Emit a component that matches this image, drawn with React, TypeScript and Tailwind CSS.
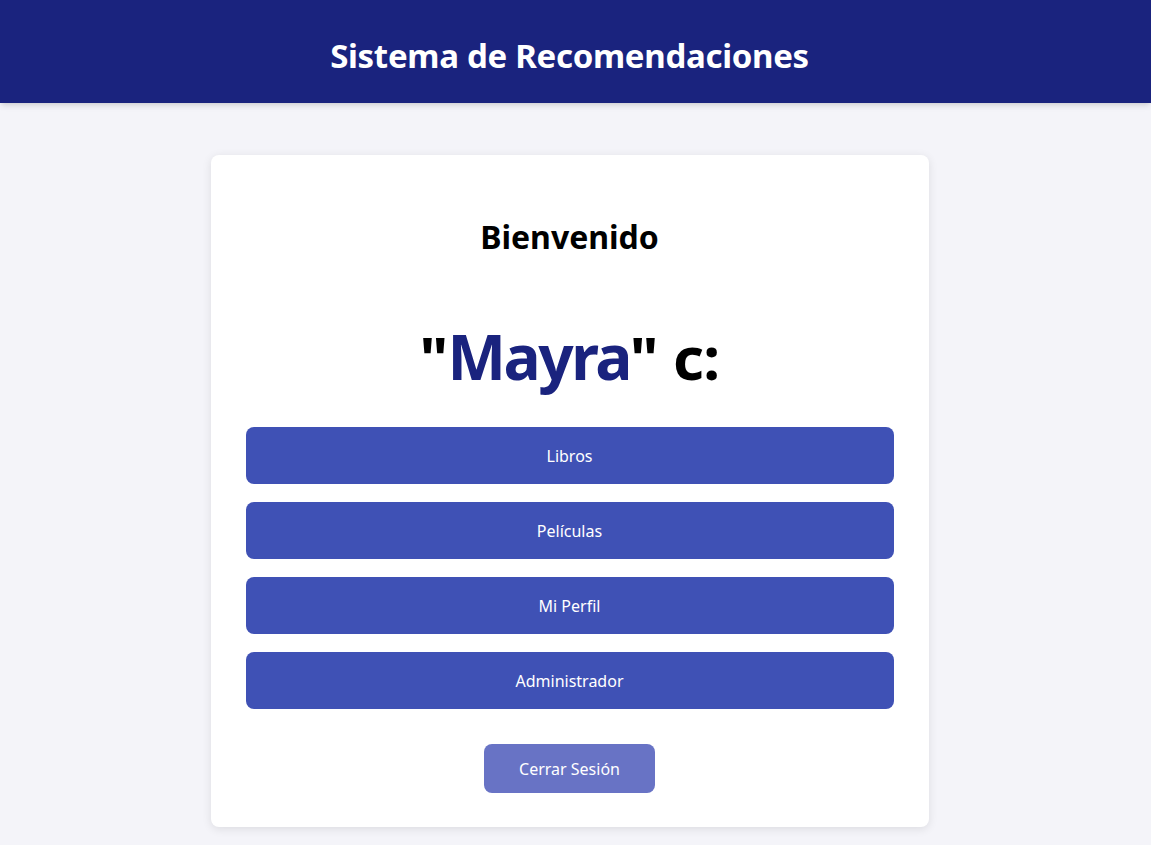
import React from 'react';

const options = ['Libros', 'Películas', 'Mi Perfil', 'Administrador'];

export default function App() {
  return (
    <div className="min-h-[845px] bg-[#f4f4f9] font-['Noto_Sans',sans-serif]">
      {/* Header */}
      <header className="h-[103px] bg-[#1a237e] flex items-center justify-center pt-2 pr-3 shadow-md">
        <h1 className="text-white text-[33px] font-bold tracking-[-0.3px]">Sistema de Recomendaciones</h1>
      </header>

      {/* Card */}
      <main className="flex justify-center pt-[52px] pr-3">
        <div className="w-[718px] bg-white rounded-lg shadow-[0_2px_10px_rgba(0,0,0,0.1)] px-[35px] pt-[58px] pb-[34px] flex flex-col items-center">
          <h2 className="text-[32px] font-bold text-black leading-[48px]">Bienvenido</h2>
          <p className="mt-[55px] text-[60px] font-bold leading-[80px] tracking-[-0.01em] text-black">
            "<span className="text-[#1a237e] text-[62px] tracking-[-0.04em]">Mayra</span>" c:
          </p>
          <div className="mt-[30px] w-full flex flex-col gap-[18px]">
            {options.map(o => (
              <button
                key={o}
                className="w-full h-[57px] rounded-lg bg-[#3f51b5] text-white text-base"
              >
                {o}
              </button>
            ))}
          </div>
          <button className="mt-[35px] w-[171px] h-[49px] rounded-lg bg-[#6873c5] text-white text-base">
            Cerrar Sesión
          </button>
        </div>
      </main>
    </div>
  );
}
